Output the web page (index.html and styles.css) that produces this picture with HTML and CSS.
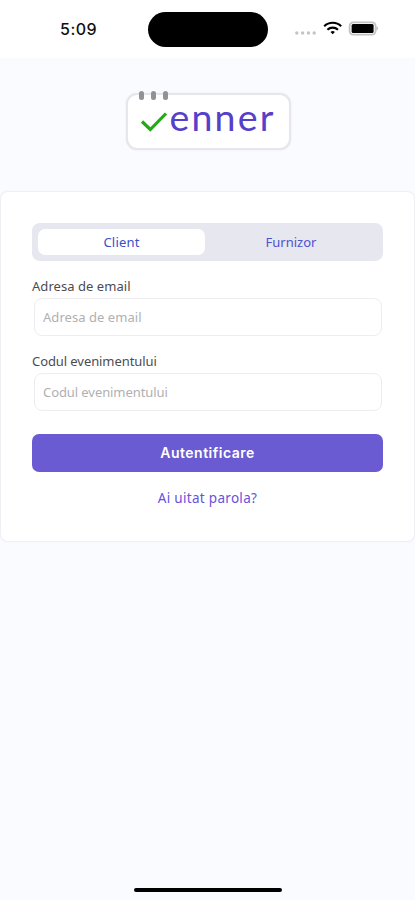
FILE: index.html
```html
<!DOCTYPE html>
<html lang="ro">
<head>
<meta charset="utf-8">
<title>Venner</title>
<link rel="stylesheet" href="styles.css">
</head>
<body>
<header class="status">
  <span class="time">5:09</span>
  <div class="island"></div>
  <svg class="indicators" width="88" height="20" viewBox="0 0 88 20">
    <g fill="#c4c4c6"><circle cx="2.8" cy="14" r="1.7"/><circle cx="8.6" cy="14" r="1.7"/><circle cx="14.4" cy="14" r="1.7"/><circle cx="20.2" cy="14" r="1.7"/></g>
    <g fill="none" stroke="#000" stroke-width="2.1"><path d="M30.2 7.2a12.2 12.2 0 0 1 17 0"/><path d="M33.4 10.8a7.6 7.6 0 0 1 10.6 0"/></g>
    <path d="M38.7 15.2l-2.200-2.200a3.200 3.200 0 0 1 4.400 0z"/>
    <rect x="55.600" y="3.300" width="26" height="12.400" rx="3.600" fill="#fff" stroke="#c2c2c4" stroke-width="1.800"/>
    <rect x="57.600" y="5" width="22" height="8.900" rx="1.500"/>
    <path d="M82.500 7.300q3.200 2.100 0 4.200z" fill="#b9b9bb"/>
  </svg>
</header>
<main>
  <div class="logo">
    <div class="rings"><i></i><i></i><i></i></div>
    <svg class="check" width="28" height="22" viewBox="0 0 28 22"><path d="M2 10.500l8.300 8L26 2.500" fill="none" stroke="#24aa17" stroke-width="3.200"/></svg>
    <span class="word">enner</span>
  </div>
  <form class="card">
    <div class="tabs"><button type="button" class="tab active">Client</button><button type="button" class="tab">Furnizor</button></div>
    <label class="field"><span>Adresa de email</span><input type="text" placeholder="Adresa de email"></label>
    <label class="field code"><span>Codul evenimentului</span><input type="text" placeholder="Codul evenimentului"></label>
    <button type="button" class="submit">Autentificare</button>
    <a class="forgot">Ai uitat parola?</a>
  </form>
</main>
<div class="home"></div>
</body>
</html>
```
FILE: styles.css
```css
* { box-sizing: border-box; }
body {
  margin: 0;
  height: 900px;
  display: flex;
  flex-direction: column;
  background: #fafbff;
  color: #4c4c50;
  font: 13px/18px "Noto Sans", sans-serif;
}
button, input { font: inherit; letter-spacing: inherit; margin: 0; border: 0; }
.status {
  height: 58px;
  display: flex;
  align-items: flex-start;
  background: #fff;
}
.time {
  width: 148px;
  padding: 19px 0 0 60px;
  color: #111;
  font: 500 16px/20px Inter, sans-serif;
  letter-spacing: 0.5px;
}
.island { width: 120px; height: 35px; margin-top: 11.500px; border-radius: 18px; background: #000; }
.indicators { margin: 19px 0 0 26px; }
main { flex: 1; }
.logo {
  width: 165px;
  height: 57px;
  margin: 34.500px 0 0 125.500px;
  padding-left: 15px;
  display: flex;
  align-items: flex-start;
  position: relative;
  border: 2px solid #e6e6eb;
  border-radius: 11px;
  background: #fff;
  box-shadow: 0 0 2px #e8e8ee;
}
.rings { position: absolute; top: -4px; left: 11.500px; display: flex; gap: 7px; }
.rings i { width: 5px; height: 9px; border-radius: 3px; background: #919196; }
.check { margin: 16px 0 0 -3px; flex: none; }
.word { margin: -1px 0 0 2px; color: #5540c9; font: 400 37.500px/46px Lato, sans-serif; letter-spacing: 2.200px; }
.card {
  height: 351px;
  margin-top: 41.500px;
  padding: 30.500px 31px 0;
  display: flex;
  flex-direction: column;
  border: 1px solid #eff0f4;
  border-radius: 8px;
  background: #fff;
  box-shadow: 0 0 2px #f0f1f5;
}
.tabs { height: 38px; padding: 6px; display: flex; border-radius: 8px; background: #e6e7ef; }
.tab { flex: 1; padding: 0; border-radius: 7px; background: none; color: #4d52d0; }
.tab.active { flex: 0 0 167px; background: #fff; color: #384fcf; letter-spacing: 0.2px; }
.field { display: flex; flex-direction: column; margin-top: 16px; letter-spacing: 0.050px; }
.field.code { letter-spacing: -0.080px; }
.field span { height: 21px; }
.field input {
  height: 38px;
  margin: 0 1px 0 2px;
  padding: 0 8px;
  border: 1px solid #ededf0;
  border-radius: 8px;
  background: #fff;
}
.field input::placeholder { color: #b0b0b3; opacity: 1; }
.submit {
  height: 38px;
  margin-top: 23px;
  padding-top: 2px;
  border-radius: 7px;
  background: #6b5bd2;
  color: #fff;
  font: 600 14px/20px Inter, sans-serif;
  letter-spacing: 0.500px;
}
.forgot { margin-top: 17px; text-align: center; color: #6852dc; font-size: 13.500px; letter-spacing: 0.300px; }
.home { width: 148px; height: 4px; margin: 0 auto 8px; border-radius: 2px; background: #000; }
```
